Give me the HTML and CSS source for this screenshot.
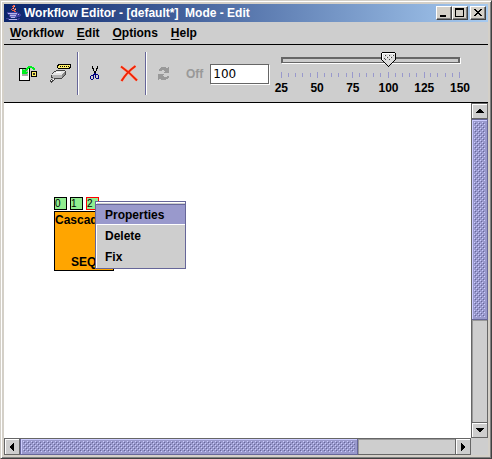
FILE: index.html
```html
<!DOCTYPE html>
<html lang="en">
<head>
<meta charset="utf-8">
<title>Workflow Editor</title>
<link rel="stylesheet" href="styles.css">
</head>
<body>
<div class="window">
  <header class="titlebar">
    <svg class="app-icon" width="16" height="16" viewBox="0 0 16 16" shape-rendering="crispEdges" aria-hidden="true">
      <path d="M7 0h2v2H8v1H7v1H6v1h1v1H6V5H5V4h1V3h1V2H6V1h1zM9 3h1v1H9v2h1v1H8V6H7V5h1V4h1z" fill="#e8604c"/>
      <path d="M8 1h1v1H8zM7 3h1v1H7zM9 4h1v1H9z" fill="#ffb0a0"/>
      <path d="M1 7h11v1h2v1h1v2h-1v1h-3v1H4v-1H3v-2H2V9H1zM0 13h3v1h9v-1h2v1h-1v1H2v-1H0z" fill="#3c3c9c"/>
      <path d="M2 8h9v1H2zM4 10h6v1H4zM5 12h4v1H5zM12 9h1v1h-1zM3 14h8v1H3z" fill="#b4b4ec"/>
      <path d="M4 9h7v1H4zM4 11h6v1H4z" fill="#6868bc"/>
    </svg>
    <h1 class="title">Workflow Editor - [default*]&nbsp; Mode - Edit</h1>
    <div class="window-buttons">
      <button class="window-button" type="button" aria-label="Minimize"><svg width="12" height="10" viewBox="0 0 12 10" shape-rendering="crispEdges"><path d="M2 7h6v2H2z"/></svg></button>
      <button class="window-button" type="button" aria-label="Maximize"><svg width="12" height="10" viewBox="0 0 12 10" shape-rendering="crispEdges"><path d="M1 0h9v9H1zM2 2v6h7V2z" fill-rule="evenodd"/></svg></button>
      <button class="window-button close" type="button" aria-label="Close"><svg width="12" height="10" viewBox="0 0 12 10" shape-rendering="crispEdges"><path d="M2 1h2v1h1v1h2V2h1V1h2v1H9v1H8v1H7v1h1v1h1v1h1v1H8V7H7V6H5v1H4v1H2V7h1V6h1V5h1V4H4V3H3V2H2z"/></svg></button>
    </div>
  </header>

  <nav class="menubar">
    <button class="menu" type="button"><u>W</u>orkflow</button>
    <button class="menu" type="button"><u>E</u>dit</button>
    <button class="menu" type="button"><u>O</u>ptions</button>
    <button class="menu" type="button"><u>H</u>elp</button>
  </nav>

  <div class="toolbar">
    <div class="tool-group">
      <button class="tool" type="button" aria-label="Import">
        <svg width="20" height="20" viewBox="0 0 20 20" shape-rendering="crispEdges">
          <path d="M1 4h11v13H1z"/><path d="M2 5h9v11H2z" fill="#fff"/><path d="M5 5h5v7H4V9h1z" fill="#aaa"/>
          <path d="M13 7h6v6h-6z"/><path d="M14 8h4v4h-4z" fill="#ffee60"/><path d="M15 9h2v2h-2z" fill="#333"/>
          <path d="M10 2h4v1h2v1h1v2h-2V5h-1V4h-3v1h-1v1H9v1H8v1h2v1H9v1H4V5h1v1h2V5h1V4h1V3h1z" fill="#00f020"/>
        </svg>
      </button>
      <button class="tool" type="button" aria-label="Connector">
        <svg width="22" height="20" viewBox="0 0 22 20" shape-rendering="crispEdges">
          <path d="M8 0h13v4h-1v1H8V4H7V1h1z"/><path d="M9 1h11v2h-1v1H8V2h1z" fill="#fff06a"/>
          <path d="M10 2h1v1h-1zM12 2h1v1h-1zM14 2h1v1h-1zM16 2h1v1h-1zM18 2h1v1h-1z"/>
          <path d="M6 6h9v1h1v4h-1v1h-1v1h-1v1h-1v1H5v1H4v1H3v1H2v1H1v-1H0v-2h1v-1h1v-1H1v-3h1V9h1V8h1V7h2z" fill="#444"/>
          <path d="M6 7h9v1h-1v1h-1v1h-1v1H2v-1h1V9h1V8h2z" fill="#e4e4e4"/>
          <path d="M2 11h10v3H4v1H3v1H2v1H1v-1h1v-2h1v-1H2z" fill="#b4b4b4"/>
          <path d="M14 8h1v3h-1v1h-1v1h-1v-3h1V9h1z" fill="#888"/><path d="M6 8h5v1H6zM1 16h1v1H1zM3 15h1v1H3z" fill="#fff"/>
        </svg>
      </button>
    </div>
    <div class="tool-group">
      <button class="tool cut" type="button" aria-label="Cut">
        <svg width="10" height="15" viewBox="0 0 10 15" shape-rendering="crispEdges">
          <path d="M2 0h1v2h1v3h2V2h1V0h1v3H7v2H6v2H4V5H3V3H2z"/>
          <path d="M4 7h2v1h2v1h1v4H6v-1H5V9H4v4H3v1H1v-1H0v-3h1V9h2V8h1zM1 10v3h2v-3zM6 9v3h2V9z" fill="#000080" fill-rule="evenodd"/>
        </svg>
      </button>
      <button class="tool delete" type="button" aria-label="Delete">
        <svg width="18" height="17" viewBox="0 0 18 17">
          <path d="M1 1.500C6 5 12 10 17 15.500M15.500 1C10 5 5 10 1.500 16" fill="none" stroke="#ffb19b" stroke-width="3"/>
          <path d="M1 1.500C6 5 12 10 17 15.500M15.500 1C10 5 5 10 1.500 16" fill="none" stroke="#ee2408" stroke-width="2"/>
        </svg>
      </button>
    </div>
    <div class="tool-group run-group">
      <button class="tool refresh" type="button" aria-label="Refresh" disabled>
        <svg width="12" height="15" viewBox="0 0 12 15" shape-rendering="crispEdges">
          <path d="M3 1h5v1h2V1h1v6H6V6h1V5H6V4H4v1H1V3h1V2h1zM0 8h6v1H5v1h1v1h3v-1h2v2h-1v1H8v1H3v-1H1v1H0z" fill="#999"/>
        </svg>
      </button>
      <button class="off" type="button" disabled>Off</button>
      <input class="zoom-field" type="text" value="100" aria-label="Zoom percent">
    </div>
    <div class="zoom">
      <input class="slider" type="range" min="25" max="150" value="100" aria-label="Zoom">
      <svg class="ticks" height="6" viewBox="0 0 180 6" preserveAspectRatio="none" shape-rendering="crispEdges" aria-hidden="true">
        <path fill="#9999cc" d="M0 0h1v6H0zM36 0h1v6h-1zM72 0h1v6h-1zM108 0h1v6h-1zM144 0h1v6h-1zM179 0h1v6h-1zM7 1h1v4H7zM14 1h1v4h-1zM21 1h1v4h-1zM29 1h1v4h-1zM43 1h1v4h-1zM50 1h1v4h-1zM57 1h1v4h-1zM65 1h1v4h-1zM79 1h1v4h-1zM86 1h1v4h-1zM93 1h1v4h-1zM100 1h1v4h-1zM115 1h1v4h-1zM122 1h1v4h-1zM129 1h1v4h-1zM136 1h1v4h-1zM150 1h1v4h-1zM157 1h1v4h-1zM165 1h1v4h-1zM172 1h1v4h-1z"/>
      </svg>
      <div class="scale"><span>25</span><span>50</span><span>75</span><span>100</span><span>125</span><span>150</span></div>
    </div>
  </div>

  <main class="workspace">
    <div class="canvas">
      <div class="node">
        <div class="ports"><span class="port">0</span><span class="port">1</span><span class="port active">2</span></div>
        <div class="node-body"><span class="node-name">Cascad</span><span class="node-kind">SEQ</span></div>
      </div>
      <div class="popup" role="menu">
        <button class="item selected" role="menuitem" type="button">Properties</button>
        <button class="item" role="menuitem" type="button">Delete</button>
        <button class="item" role="menuitem" type="button">Fix</button>
      </div>
    </div>
    <div class="scrollbar vertical">
      <button class="arrow" type="button" aria-label="Scroll up"><svg width="8" height="4" viewBox="0 0 8 4" shape-rendering="crispEdges"><path d="M3 0h2v1h1v1h1v1h1v1H0V3h1V2h1V1h1z"/></svg></button>
      <div class="thumb"><svg class="bumps" width="100%" height="100%" aria-hidden="true">
        <defs><pattern id="bumps" width="4" height="4" patternUnits="userSpaceOnUse"><path d="M0 0h1v1H0zM2 2h1v1H2z" fill="#ccccff"/><path d="M1 1h1v1H1zM3 3h1v1H3z" fill="#666699"/></pattern></defs>
        <rect width="100%" height="100%" fill="url(#bumps)"/></svg></div>
      <div class="track"></div>
      <button class="arrow" type="button" aria-label="Scroll down"><svg width="8" height="4" viewBox="0 0 8 4" shape-rendering="crispEdges"><path d="M0 0h8v1H7v1H6v1H5v1H3V3H2V2H1V1H0z"/></svg></button>
    </div>
    <div class="scrollbar horizontal">
      <button class="arrow" type="button" aria-label="Scroll left"><svg width="4" height="8" viewBox="0 0 4 8" shape-rendering="crispEdges"><path d="M3 0h1v8H3V7H2V6H1V5H0V3h1V2h1V1h1z"/></svg></button>
      <div class="thumb"><svg class="bumps" width="100%" height="100%" aria-hidden="true"><rect width="100%" height="100%" fill="url(#bumps)"/></svg></div>
      <div class="track"></div>
      <button class="arrow" type="button" aria-label="Scroll right"><svg width="4" height="8" viewBox="0 0 4 8" shape-rendering="crispEdges"><path d="M0 0h1v1h1v1h1v1h1v2H3v1H2v1H1v1H0z"/></svg></button>
    </div>
    <div class="corner"></div>
  </main>
</div>
</body>
</html>
```
FILE: styles.css
```css
* { box-sizing: border-box; }

body {
  margin: 0;
  font: bold 12px/16px "Liberation Sans", Arial, sans-serif;
  color: #000;
}

button {
  margin: 0;
  padding: 0;
  border: 0;
  background: none;
  font: inherit;
  color: inherit;
}

svg { display: block; }

.window {
  display: flex;
  flex-direction: column;
  height: 100vh;
  padding: 3px;
  border: 1px solid;
  border-color: #d4d0c8 #404040 #404040 #d4d0c8;
  background: #cecece;
  box-shadow: inset 1px 1px #fff, inset -1px -1px #808080, inset 0 0 0 3px #d4d0c8;
}

/* Title bar */
.titlebar {
  display: flex;
  align-items: center;
  height: 18px;
  padding: 0 2px;
  background: linear-gradient(90deg, #0a246a, #a6caf0);
  color: #fff;
}

.title {
  flex: 1;
  margin: 0 0 0 2px;
  font-size: 12px;
  white-space: nowrap;
}

.window-buttons { display: flex; }

.window-button {
  width: 16px;
  height: 14px;
  padding: 1px;
  border: 1px solid;
  border-color: #fff #404040 #404040 #fff;
  background: #d4d0c8;
  box-shadow: inset -1px -1px #808080;
}

.window-button.close { margin-left: 2px; }

/* Menu bar */
.menubar {
  display: flex;
  gap: 13px;
  height: 23px;
  padding: 0 6px;
  border-bottom: 1px solid #000;
}

.menu u { text-underline-offset: 2px; }

/* Tool bar */
.toolbar {
  display: flex;
  height: 58px;
  padding: 7px 28px 7px 14px;
  border-bottom: 1px solid #000;
}

.tool-group {
  display: flex;
  align-items: center;
  gap: 12px;
  margin-right: 12px;
  padding-right: 5px;
  border-right: 1px solid #666699;
  box-shadow: 1px 0 #fff;
}

.cut { margin-right: 8px; }

.tool-group .delete { margin-right: 2px; }

.run-group {
  margin-right: 12px;
  padding: 0;
  border: 0;
  box-shadow: none;
}

.run-group .off {
  margin: 0 -5px 0 4px;
  color: #999;
}

.zoom-field {
  width: 59px;
  height: 20px;
  margin: 0;
  padding: 0 2px;
  border: 1px solid #666;
  outline: 0;
  box-shadow: 1px 1px #fff;
  font: 12px/16px "DejaVu Sans", sans-serif;
}

.zoom {
  flex: 1;
  min-width: 0;
}

.slider {
  display: block;
  width: calc(100% + 14px);
  height: 16px;
  margin: 0 -7px;
  appearance: none;
  background:
    linear-gradient(#ccc, #ccc) 9px 7px / calc(100% - 18px) 3px no-repeat,
    linear-gradient(#666, #666) 7px 5px / calc(100% - 14px) 6px no-repeat,
    linear-gradient(#fff, #fff) 8px 6px / calc(100% - 14px) 6px no-repeat;
}

.slider::-webkit-slider-thumb {
  width: 15px;
  height: 16px;
  appearance: none;
  background: url("data:image/svg+xml,%3Csvg xmlns='http://www.w3.org/2000/svg' width='15' height='16' shape-rendering='crispEdges'%3E%3Cpath d='M1 0h13v1h1v7h-1v1h-1v1h-1v1h-1v1h-1v1H9v1H8v1H7v-1H6v-1H5v-1H4v-1H3v-1H2V9H1V8H0V1h1z'/%3E%3Cpath d='M1 1h13v7h-1v1h-1v1h-1v1h-1v1H9v1H8v1H7v-1H6v-1H5v-1H4v-1H3V9H2V8H1z' fill='%23ddd'/%3E%3Cpath d='M1 1h13v1H2v6H1zM3 3h1v1H3zM7 3h1v1H7zM11 3h1v1h-1zM5 5h1v1H5zM9 5h1v1H9z' fill='white'/%3E%3Cpath d='M4 3h1v1H4zM8 3h1v1H8zM12 3h1v1h-1zM6 5h1v1H6zM10 5h1v1h-1zM3 6h1v1H3zM4 7h1v1H4zM8 7h1v1H8z' fill='%23444'/%3E%3C/svg%3E");
}

.ticks {
  width: 100%;
  margin-top: 4px;
}

.scale {
  display: flex;
  justify-content: space-between;
  margin-top: 2px;
}

.scale span {
  display: flex;
  justify-content: center;
  width: 0;
}

/* Workspace */
.workspace {
  display: grid;
  flex: 1;
  grid-template-columns: 1fr 17px;
  grid-template-rows: 1fr 17px;
  min-height: 0;
}

.canvas {
  position: relative;
  overflow: hidden;
  background: #fff;
}

.node {
  position: absolute;
  top: 94px;
  left: 50px;
}

.ports {
  display: flex;
  gap: 3px;
  margin-bottom: 1px;
}

.port {
  width: 13px;
  height: 13px;
  border: 1px solid #000;
  background: #90ee90;
  font-weight: normal;
  font-size: 10px;
  line-height: 11px;
}

.port.active { border-color: #f00; }

.node-body {
  display: flex;
  flex-direction: column;
  justify-content: space-between;
  width: 60px;
  height: 60px;
  border: 1px solid #000;
  background: #ffa500;
  overflow: hidden;
}

.node-kind { padding-left: 16px; }

.popup {
  position: absolute;
  top: 98px;
  left: 91px;
  display: flex;
  flex-direction: column;
  width: 91px;
  padding: 2px 0 1px;
  border: 1px solid #666699;
  background: #cecece;
  box-shadow: inset 1px 1px #fff;
}

.item {
  height: 21px;
  padding: 0 9px;
  text-align: left;
}

.item.selected {
  border-top: 1px solid #666699;
  border-bottom: 1px solid #fff;
  background: #9999cc;
}

/* Scroll bars */
.scrollbar {
  display: flex;
  min-width: 0;
  min-height: 0;
  border: 1px solid #666;
}

.vertical {
  flex-direction: column;
  border-width: 0 0 0 1px;
}

.horizontal { border-width: 1px 0 0; }

.arrow {
  display: grid;
  flex: none;
  place-items: center;
  width: 16px;
  height: 16px;
  border: 1px solid #666;
  box-shadow: inset 1px 1px #fff;
}

.vertical .arrow { border-left: 0; }
.horizontal .arrow { border-top: 0; }

.thumb {
  padding: 2px;
  border: 1px solid #666699;
  background: #9999cc;
  box-shadow: inset 1px 1px #ccccff;
}

.vertical .thumb {
  flex: 199 1 0;
  border-left: 0;
}

.horizontal .thumb {
  flex: 335 1 0;
  border-top: 0;
}

.thumb, .track { min-width: 0; min-height: 0; }

.vertical .track {
  flex: 104 1 0;
  border-right: 1px solid #666;
  box-shadow: inset 1px 1px #999;
}

.horizontal .track {
  flex: 98 1 0;
  border-bottom: 1px solid #666;
  box-shadow: inset 1px 1px #999;
}
```
